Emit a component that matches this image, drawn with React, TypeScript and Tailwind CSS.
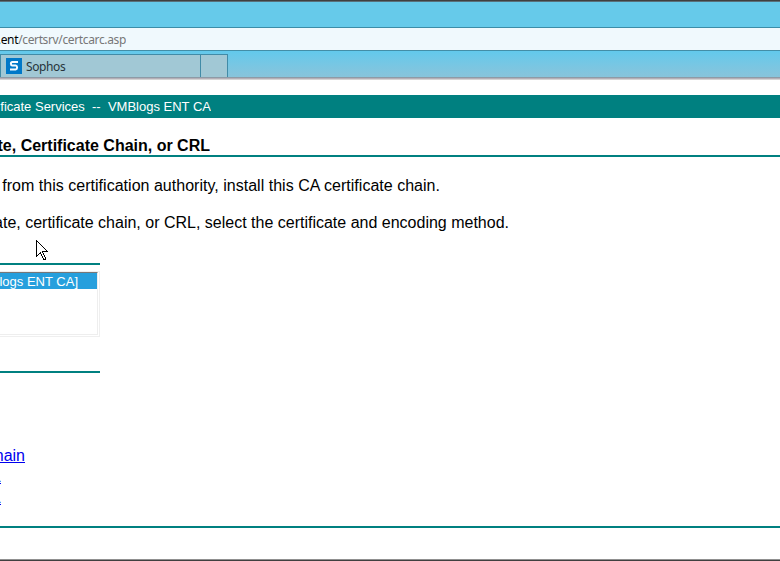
import React from "react";

type LineProps = { width: string; className?: string; children: React.ReactNode };

// A line whose beginning runs off the left edge of the viewport.
function ClippedLine({ width, className = "", children }: LineProps) {
  return (
    <div className={`flex justify-end overflow-hidden whitespace-pre ${width} ${className}`}>
      <span className="shrink-0">{children}</span>
    </div>
  );
}

function SophosIcon() {
  return (
    <svg width="16" height="16" viewBox="0 0 16 16" className="shrink-0">
      <rect width="16" height="16" fill="#0078c8" />
      <path d="M12 4H6.4Q4.9 4 4.9 5.7T6.4 7.6H9.7Q11.1 7.8 11.1 9.5T9.7 11.5H4" fill="none" stroke="#f4faff" strokeWidth="2" />
    </svg>
  );
}

function Pointer() {
  return (
    <svg width="13" height="21" viewBox="0 0 13 21" shapeRendering="crispEdges" className="absolute left-[36px] top-[240px]">
      <path d="M.5.5V16.5L4.5 12.5L7.5 19.5Q9 20.5 9.5 18.5L6.5 11.5H11.5Z" fill="#fff" stroke="#000" />
    </svg>
  );
}

export default function App() {
  return (
    <div className="relative flex h-[561px] w-[780px] flex-col overflow-hidden bg-white font-['Liberation_Sans',Arial,sans-serif] text-black">
      <header className="shrink-0 font-['Noto_Sans','Open_Sans',sans-serif]">
        <div className="h-7 border-t border-b border-t-[#404040] border-b-[#3c8da8] bg-[#66caea]">
          <div className="h-px bg-[#59707a]" />
        </div>
        <div className="flex h-[23px] items-center border-b border-[#438ea7] bg-[#f0f9fd]">
          <ClippedLine width="w-[126px]" className="pt-[2px] text-[12px] leading-[22px] tracking-[-0.36px] text-[#777]">
            <span className="text-black">.ent</span>/certsrv/certcarc.asp
          </ClippedLine>
        </div>
        <div className="flex h-[26px] items-end bg-linear-to-b from-[#62c9ec] to-[#88c4db]">
          <div className="flex h-[23px] w-[201px] items-center gap-1 border-t border-r border-l border-[#418ba7] bg-[#a1c8d5] pl-[5px]">
            <SophosIcon />
            <span className="pt-[2px] text-[12px] leading-4 tracking-[-0.4px] text-[#26343a]">Sophos</span>
          </div>
          <div className="h-[23px] w-[27px] border-t border-r border-[#418ba7] bg-[#a1c8d5]" />
        </div>
        <div className="h-px bg-[#8d9ba6]" />
        <div className="h-px bg-[#b5afb7]" />
        <div className="h-px bg-[#d4d4d4]" />
      </header>

      <main className="flex flex-1 flex-col pt-[15px]">
        <div className="h-[23px] bg-[#008080]">
          <ClippedLine width="w-[211px]" className="text-[13px] leading-[23px] text-white">
            ficate Services  --  VMBlogs ENT CA
          </ClippedLine>
        </div>
        <h1 className="mt-[18px] h-[21px] border-b-2 border-[#008080] font-bold">
          <ClippedLine width="w-[210px]" className="text-[16px] leading-[19px]">te, Certificate Chain, or CRL</ClippedLine>
        </h1>
        <ClippedLine width="w-[440px]" className="mt-[19px] text-[16px] leading-[19px] tracking-[0.02px]">
          from this certification authority, install this CA certificate chain.
        </ClippedLine>
        <ClippedLine width="w-[509px]" className="mt-[18px] text-[16px] leading-[19px]">
          ate, certificate chain, or CRL, select the certificate and encoding method.
        </ClippedLine>

        <section className="mt-[31px] h-[110px] w-[100px] border-t-2 border-b-2 border-[#008080] pt-[6px]">
          <div className="h-[66px] border-t border-r border-b border-[#efefef] pr-px pb-px">
            <div className="h-[63px] border-t border-r border-b border-[#eeeeee] border-t-[#777]">
              <div className="h-4 bg-[#269fdd]">
                <ClippedLine width="w-[78px]" className="text-[13px] leading-[18px] text-white">logs ENT CA]</ClippedLine>
              </div>
            </div>
          </div>
        </section>

        <nav className="mt-[72px] flex flex-col text-[16px] leading-[21px] text-[#0000ee] underline">
          <ClippedLine width="w-[25px]"><a>hain</a></ClippedLine>
          <ClippedLine width="w-px"><a>L</a></ClippedLine>
          <ClippedLine width="w-px"><a>L</a></ClippedLine>
        </nav>
        <div className="mt-[18px] h-[2px] bg-[#008080]" />
        <div className="mt-auto h-px bg-[#909090]" />
        <div className="h-px bg-[#404040]" />
      </main>
      <Pointer />
    </div>
  );
}
